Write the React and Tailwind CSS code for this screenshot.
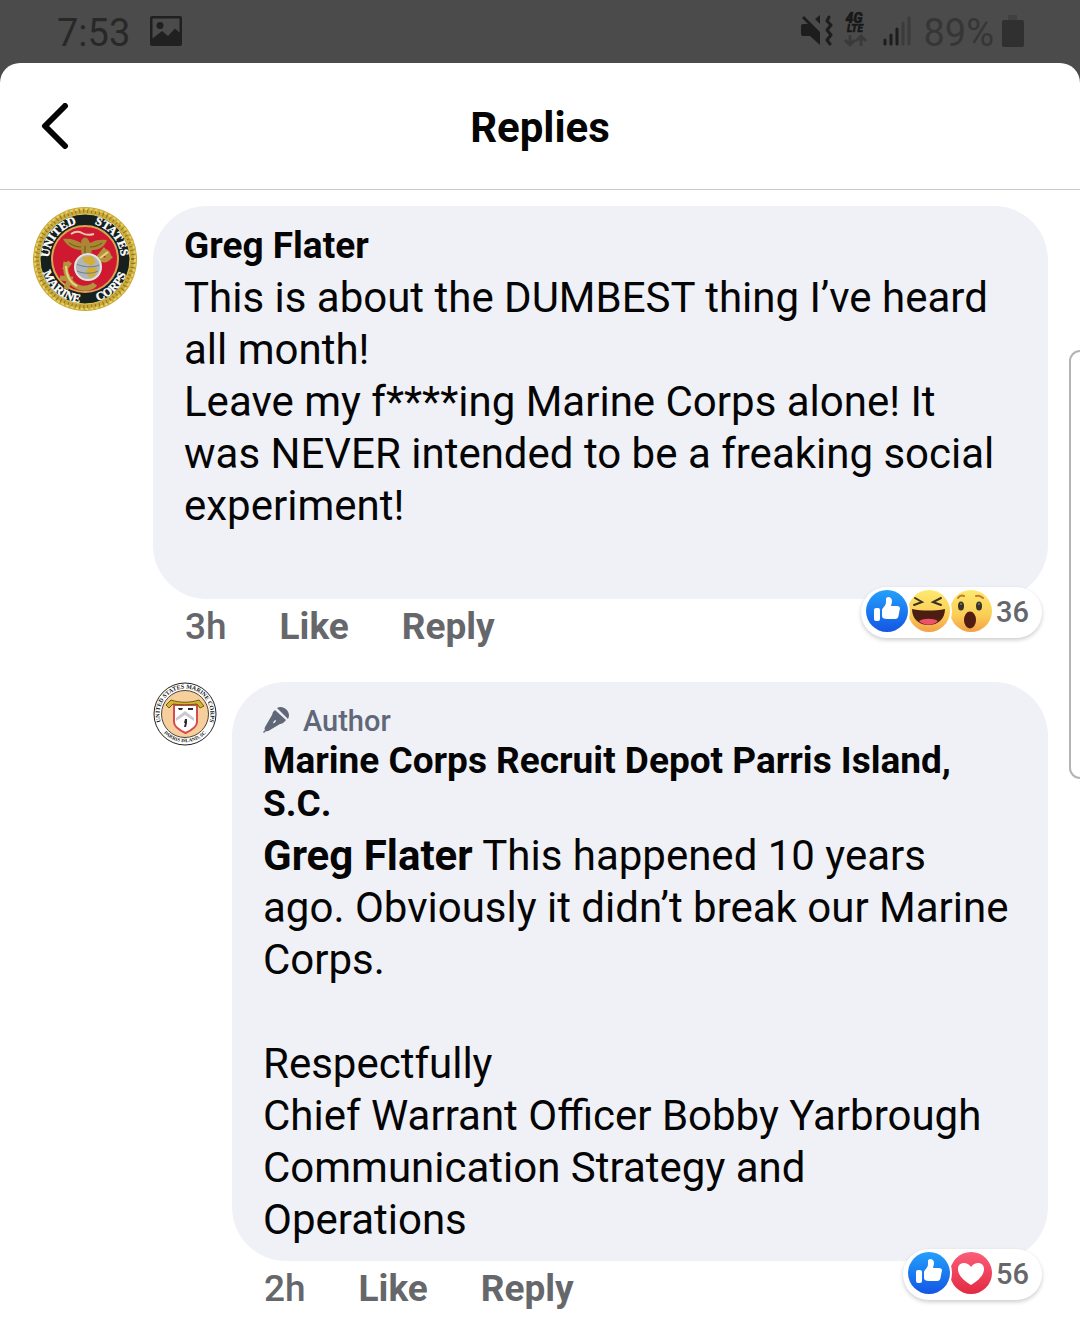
import React, { useState } from "react";

function StatusBar() {
  return (
    <div className="flex h-[63px] items-center justify-between pl-[57px] pr-[56px] pb-px">
      <div className="flex items-center gap-5">
        <span className="pt-[3px] text-[38px] leading-[42px] text-[#282828]">7:53</span>
        <svg viewBox="0 0 32 30" className="h-[30px] w-8" fill="#202020">
          <path
            fillRule="evenodd"
            d="M2 0h28a2 2 0 0 1 2 2v26a2 2 0 0 1-2 2H2a2 2 0 0 1-2-2V2a2 2 0 0 1 2-2ZM2.500 2.500v20L12 15l6 5 7-7.500 4.500 4v-14Z"
          />
          <circle cx="10" cy="9.500" r="3.500" />
        </svg>
      </div>
      <div className="flex items-center">
        <svg viewBox="0 0 32 32" className="h-8 w-8" fill="#1d1d1d">
          <path d="M0 11q0-2 2-2h5L1 3l2-2 16 16v13L9 21H2q-2 0-2-2Z" />
          <path d="M19 0v9l-5-5Z" />
          <path
            d="M28 2l-2 4 4 4-4 5 4 5-4 5 3 4"
            fill="none"
            stroke="#1d1d1d"
            strokeWidth="3"
            strokeLinejoin="round"
            strokeLinecap="round"
          />
        </svg>
        <svg viewBox="0 -3 24 40" className="ml-[11px] h-10 w-6">
          <g
            fill="#181818"
            stroke="#181818"
            strokeWidth="0.500"
            fontFamily="Roboto, sans-serif"
            fontWeight="900"
            fontStyle="italic"
            textAnchor="middle"
          >
            <text x="10" y="9" fontSize="14">4G</text>
            <text x="11" y="18" fontSize="10">LTE</text>
          </g>
          <path
            d="M6 21v10M1 26l5 5 5-5M17 32V22M12 27l5-5 5 5"
            fill="none"
            stroke="#3a3a3a"
            strokeWidth="3"
          />
        </svg>
        <svg viewBox="0 0 28 30" className="ml-[15px] h-[30px] w-7">
          <g strokeWidth="3" strokeLinecap="round">
            <path d="M2 24v4M8 19v9M14 13v15" stroke="#1d1d1d" />
            <path d="M20 7v21M26 2v26" stroke="#3b3b3b" />
          </g>
        </svg>
        <span className="ml-3 pt-[3px] text-[38px] leading-[42px] text-[#363636]">89%</span>
        <svg viewBox="0 0 22 32" className="ml-2 h-8 w-[22px]">
          <path d="M6 0h9v6H6Z" fill="#404040" />
          <rect y="5" width="22" height="27" rx="2" fill="#303030" />
        </svg>
      </div>
    </div>
  );
}

function MarineSeal() {
  return (
    <svg viewBox="0 0 106 106" className="h-[106px] w-[106px]" role="img" aria-label="United States Marine Corps">
      <defs>
        <path id="sealTop" d="M17 53a36 36 0 0 1 72 0" />
        <path id="sealBottom" d="M9 53a44 44 0 0 0 88 0" />
      </defs>
      <circle cx="53" cy="53" r="52" fill="#c9a93a" />
      <circle cx="53" cy="53" r="48" fill="none" stroke="#8d7420" strokeWidth="4" strokeDasharray="1 3" />
      <circle cx="53" cy="53" r="50" fill="none" stroke="#e8cf62" strokeWidth="2" strokeDasharray="3 2" />
      <circle cx="53" cy="53" r="45" fill="#15201f" stroke="#e0c75a" />
      <circle cx="53" cy="53" r="33" fill="#cf1931" stroke="#d9a552" strokeWidth="2" />
      <g
        fill="#ffffff"
        stroke="#ffffff"
        strokeWidth="0.400"
        fontFamily="'Liberation Serif', serif"
        fontWeight="700"
        fontSize="12"
        textAnchor="middle"
      >
        <text>
          <textPath href="#sealTop" startOffset="22%">UNITED</textPath>
        </text>
        <text>
          <textPath href="#sealTop" startOffset="78%">STATES</textPath>
        </text>
        <text>
          <textPath href="#sealBottom" startOffset="28%">MARINE</textPath>
        </text>
        <text>
          <textPath href="#sealBottom" startOffset="74%">CORPS</textPath>
        </text>
      </g>
      <path d="M39 28q6-4 11-1t12 1" fill="none" stroke="#e9c9a8" strokeWidth="2" />
      <path d="M31 33c7-1 13 1 18 4 0-6 6-8 8-2l1 2c5-3 10-4 17-3-3 8-9 10-15 10l-2 8h-8l-1-8c-7 0-14-4-18-11Z" fill="#a98733" />
      <path d="M37 37c5 3 8 4 12 4M70 37c-5 3-8 4-12 4M53 40v9" fill="none" stroke="#6d5524" strokeWidth="1" />
      <path d="M34 56c-2 11 3 21 12 25 7 3 15 0 17-3M28 72l10 1-4 10M38 56l-6 8M68 52c5 4 10 1 8-4-2-4-7-2-6 2M64 55l8-10 7 8" fill="none" stroke="#b3943c" strokeWidth="5" />
      <path d="M34 60c0 9 4 17 11 20M68 52l8-6" fill="none" stroke="#ead37d" strokeWidth="2" />
      <circle cx="56" cy="61" r="13" fill="#aeb6ba" stroke="#e4e4dc" strokeWidth="2" />
      <path d="M50 51l10-1 4 6-5 4-3-2-4-2ZM57 61l8 1-2 8-6 2-3-7Z" fill="#d4ae35" />
      <path d="M45 58c4 3 17 4 22 1M45 65c6 3 16 3 21 0" fill="none" stroke="#707d86" strokeWidth="1" />
    </svg>
  );
}

function DepotSeal() {
  return (
    <svg viewBox="0 0 64 64" className="h-16 w-16" role="img" aria-label="Marine Corps Recruit Depot Parris Island">
      <defs>
        <path id="depotTop" d="M10 45a25.500 25.500 0 1 1 44 0" />
        <path id="depotBottom" d="M6 44a29 29 0 0 0 52 0" />
      </defs>
      <circle cx="32" cy="32" r="31" fill="#ffffff" stroke="#222222" />
      <circle cx="32" cy="32" r="23.500" fill="#f6cf9c" stroke="#4f4638" />
      <g fill="#161616" fontFamily="'Liberation Serif', serif" fontWeight="700" textAnchor="middle">
        <text fontSize="6">
          <textPath href="#depotTop" startOffset="50%">UNITED STATES MARINE CORPS</textPath>
        </text>
        <text fontSize="5">
          <textPath href="#depotBottom" startOffset="50%">PARRIS ISLAND, SC</textPath>
        </text>
      </g>
      <path d="M21 23h23v17c0 5-5 8-11.500 11C26 48 21 45 21 40Z" fill="#ffffff" stroke="#d54b50" strokeWidth="2" />
      <path d="M32 29l9 7v3l-9-6-9 6v-3Z" fill="#c9c9cf" />
      <path d="M25 26h5l-1 2h-3ZM35 26h5v2h-5ZM32 37h2v4l-1 4h-2l1-4h-1Z" fill="#2b2b35" />
      <path d="M13 23l5-5c9 3 19 3 28 0l5 6-4 2-3-4c-8 1-17 1-24 0l-4 4Z" fill="#d3b52f" stroke="#6b5b16" />
    </svg>
  );
}

function LikeIcon() {
  return (
    <svg viewBox="0 0 42 42" className="h-[42px] w-[42px]">
      <defs>
        <linearGradient id="likeFill" x1="0" y1="0" x2="0" y2="1">
          <stop offset="0" stopColor="#23a0fb" />
          <stop offset="1" stopColor="#1456e4" />
        </linearGradient>
      </defs>
      <circle cx="21" cy="21" r="21" fill="url(#likeFill)" />
      <rect x="8" y="18" width="6" height="13" rx="2" fill="#ffffff" />
      <path
        d="M16 20c0-2 4-4 4-8V9c0-3 6-3 6 2 0 2-1 4-1 5h6q3 0 3 2.500l-.500 2-.500 3-.500 2.500q-.500 3-3.500 3h-8q-5 0-5-3Z"
        fill="#ffffff"
      />
    </svg>
  );
}

function FaceGradient({ id }) {
  return (
    <linearGradient id={id} x1="0" y1="0" x2="0" y2="1">
      <stop offset="0" stopColor="#fee970" />
      <stop offset="0.600" stopColor="#fbce55" />
      <stop offset="1" stopColor="#f3a047" />
    </linearGradient>
  );
}

function HahaIcon() {
  return (
    <svg viewBox="0 0 42 42" className="h-[42px] w-[42px]">
      <defs>
        <FaceGradient id="hahaFill" />
      </defs>
      <circle cx="21" cy="21" r="21" fill="url(#hahaFill)" />
      <path d="M7 8l7 4-8 3M33 8l-8 4 8 3" fill="none" stroke="#3c3323" strokeWidth="2" strokeLinecap="round" />
      <path d="M4 19c10 2 23 2 33 0 0 10-7 16-16.500 16S4 29 4 19Z" fill="#4b1d13" />
      <path d="M11 31c5-3 14-3 19 0-5 5-14 5-19 0Z" fill="#f1506b" />
    </svg>
  );
}

function WowIcon() {
  return (
    <svg viewBox="0 0 42 42" className="h-[42px] w-[42px]">
      <defs>
        <FaceGradient id="wowFill" />
      </defs>
      <circle cx="21" cy="21" r="21" fill="url(#wowFill)" />
      <path d="M8 8c2-3 4-3 6-2M26 6c3-1 5 0 7 2" fill="none" stroke="#c57b2c" strokeWidth="2" strokeLinecap="round" />
      <ellipse cx="11" cy="16" rx="3" ry="4.500" fill="#3a3328" />
      <ellipse cx="29" cy="16" rx="3" ry="4.500" fill="#3a3328" />
      <circle cx="11" cy="14" r="1" fill="#6f7c92" />
      <circle cx="29" cy="14" r="1" fill="#6f7c92" />
      <ellipse cx="20" cy="30" rx="6" ry="8.500" fill="#521c12" />
    </svg>
  );
}

function LoveIcon() {
  return (
    <svg viewBox="0 0 42 42" className="h-[42px] w-[42px]">
      <defs>
        <linearGradient id="loveFill" x1="0" y1="0" x2="0" y2="1">
          <stop offset="0" stopColor="#fb5d78" />
          <stop offset="1" stopColor="#e22a42" />
        </linearGradient>
      </defs>
      <circle cx="21" cy="21" r="21" fill="url(#loveFill)" />
      <path d="M21 33C13 28 8 23 8 17c0-7 9-8 13-2 4-6 13-5 13 2 0 6-5 11-13 16Z" fill="#ffffff" />
    </svg>
  );
}

const reactionIcons = {
  like: LikeIcon,
  haha: HahaIcon,
  wow: WowIcon,
  love: LoveIcon,
};

function Reactions({ types, count }) {
  return (
    <button
      type="button"
      aria-label={`${count} reactions`}
      className="absolute right-1.5 -top-3 flex h-[51px] items-center rounded-full bg-white pl-[3px] pr-[13px] pb-1 shadow-[0_2px_4px_rgba(0,0,0,0.2)]"
    >
      {types.map((type, i) => {
        const Icon = reactionIcons[type];
        return (
          <span
            key={type}
            className="relative -mr-1 rounded-full border-2 border-white bg-white"
            style={{ zIndex: types.length - i }}
          >
            <Icon />
          </span>
        );
      })}
      <span className="ml-1.5 pt-0.5 text-[29px] leading-[34px] font-medium text-[#65676b]">{count}</span>
    </button>
  );
}

function CommentFooter({ time, reactions, count }) {
  const [liked, setLiked] = useState(false);
  return (
    <div className="relative flex h-[83px] gap-[53px] pl-8 pt-1.5 text-[37px] leading-[44px] text-[#65676b]">
      <span className="font-medium">{time}</span>
      <button
        type="button"
        aria-pressed={liked}
        onClick={() => setLiked(!liked)}
        className="self-start font-bold"
      >
        Like
      </button>
      <button type="button" className="self-start font-bold">
        Reply
      </button>
      <Reactions types={reactions} count={count} />
    </div>
  );
}

function MicIcon() {
  return (
    <svg viewBox="0 0 28 28" className="h-7 w-7" fill="#606778">
      <path d="M14 2c6-4 15 4 11 11Z" />
      <path
        fillRule="evenodd"
        d="M12 4l11 10q-3 4-6 4L7 24q-3 2-4 1l-2 2-1-1 2-2q-1-1 0-3l7-12q0-3 3-5ZM12 14q-2 2-2 3 1 1 3-2 0-1-1-1Z"
      />
    </svg>
  );
}

export default function App() {
  return (
    <div className="min-h-screen overflow-hidden bg-[#4b4b4b] font-[Roboto,sans-serif] text-[#050505]">
      <StatusBar />
      <div className="relative min-h-[calc(100vh-63px)] rounded-t-[20px] bg-white">
        <header className="grid h-[127px] grid-cols-[1fr_auto_1fr] items-center border-b border-[#c8c9cc] px-[41px]">
          <button type="button" aria-label="Back" className="justify-self-start">
            <svg viewBox="0 0 28 46" className="h-[46px] w-7" fill="none">
              <path
                d="M24 3L4 23l20 20"
                stroke="#050505"
                strokeWidth="6"
                strokeLinecap="round"
                strokeLinejoin="round"
              />
            </svg>
          </button>
          <h1 className="pt-1 text-[42px] leading-[50px] font-bold">Replies</h1>
        </header>

        <main className="pl-8 pr-8 pt-4">
          <article className="flex items-start gap-[15px]">
            <MarineSeal />
            <div className="min-w-0 flex-1">
              <div className="rounded-[54px] bg-[#f0f1f6] pl-[31px] pr-8 pt-[18px] pb-[15px]">
                <h2 className="mb-[5px] text-[37px] leading-[43px] font-bold">Greg Flater</h2>
                <p className="text-[42px] leading-[52px]">
                  This is about the DUMBEST thing I’ve heard all month!
                  <br />
                  Leave my f****ing Marine Corps alone! It was NEVER intended to be a freaking social experiment!
                </p>
                <p className="h-[52px]" />
              </div>
              <CommentFooter time="3h" reactions={["like", "haha", "wow"]} count={36} />
            </div>
          </article>

          <article className="ml-[121px] flex items-start gap-[15px]">
            <DepotSeal />
            <div className="min-w-0 flex-1">
              <div className="rounded-[54px] bg-[#f0f1f6] pl-[31px] pr-8 pt-[18px] pb-[15px]">
                <div className="flex h-[39px] items-center gap-3 text-[29px] leading-[39px] font-medium text-[#606778]">
                  <MicIcon />
                  <span className="pt-[3px]">Author</span>
                </div>
                <h2 className="mb-[5px] text-[37px] leading-[43px] font-bold">
                  Marine Corps Recruit Depot Parris Island, S.C.
                </h2>
                <p className="text-[42px] leading-[52px]">
                  <b>Greg Flater</b> This happened 10 years ago. Obviously it didn’t break our Marine Corps.
                  <br />
                  <br />
                  Respectfully
                  <br />
                  Chief Warrant Officer Bobby Yarbrough Communication Strategy and Operations
                </p>
              </div>
              <CommentFooter time="2h" reactions={["like", "love"]} count={56} />
            </div>
          </article>
        </main>

        {/* edge panel handle */}
        <div className="absolute right-0 top-[287px] h-[429px] w-[11px] rounded-l-[14px] border-2 border-r-0 border-[#b4b4b4] bg-white" />
      </div>
    </div>
  );
}
